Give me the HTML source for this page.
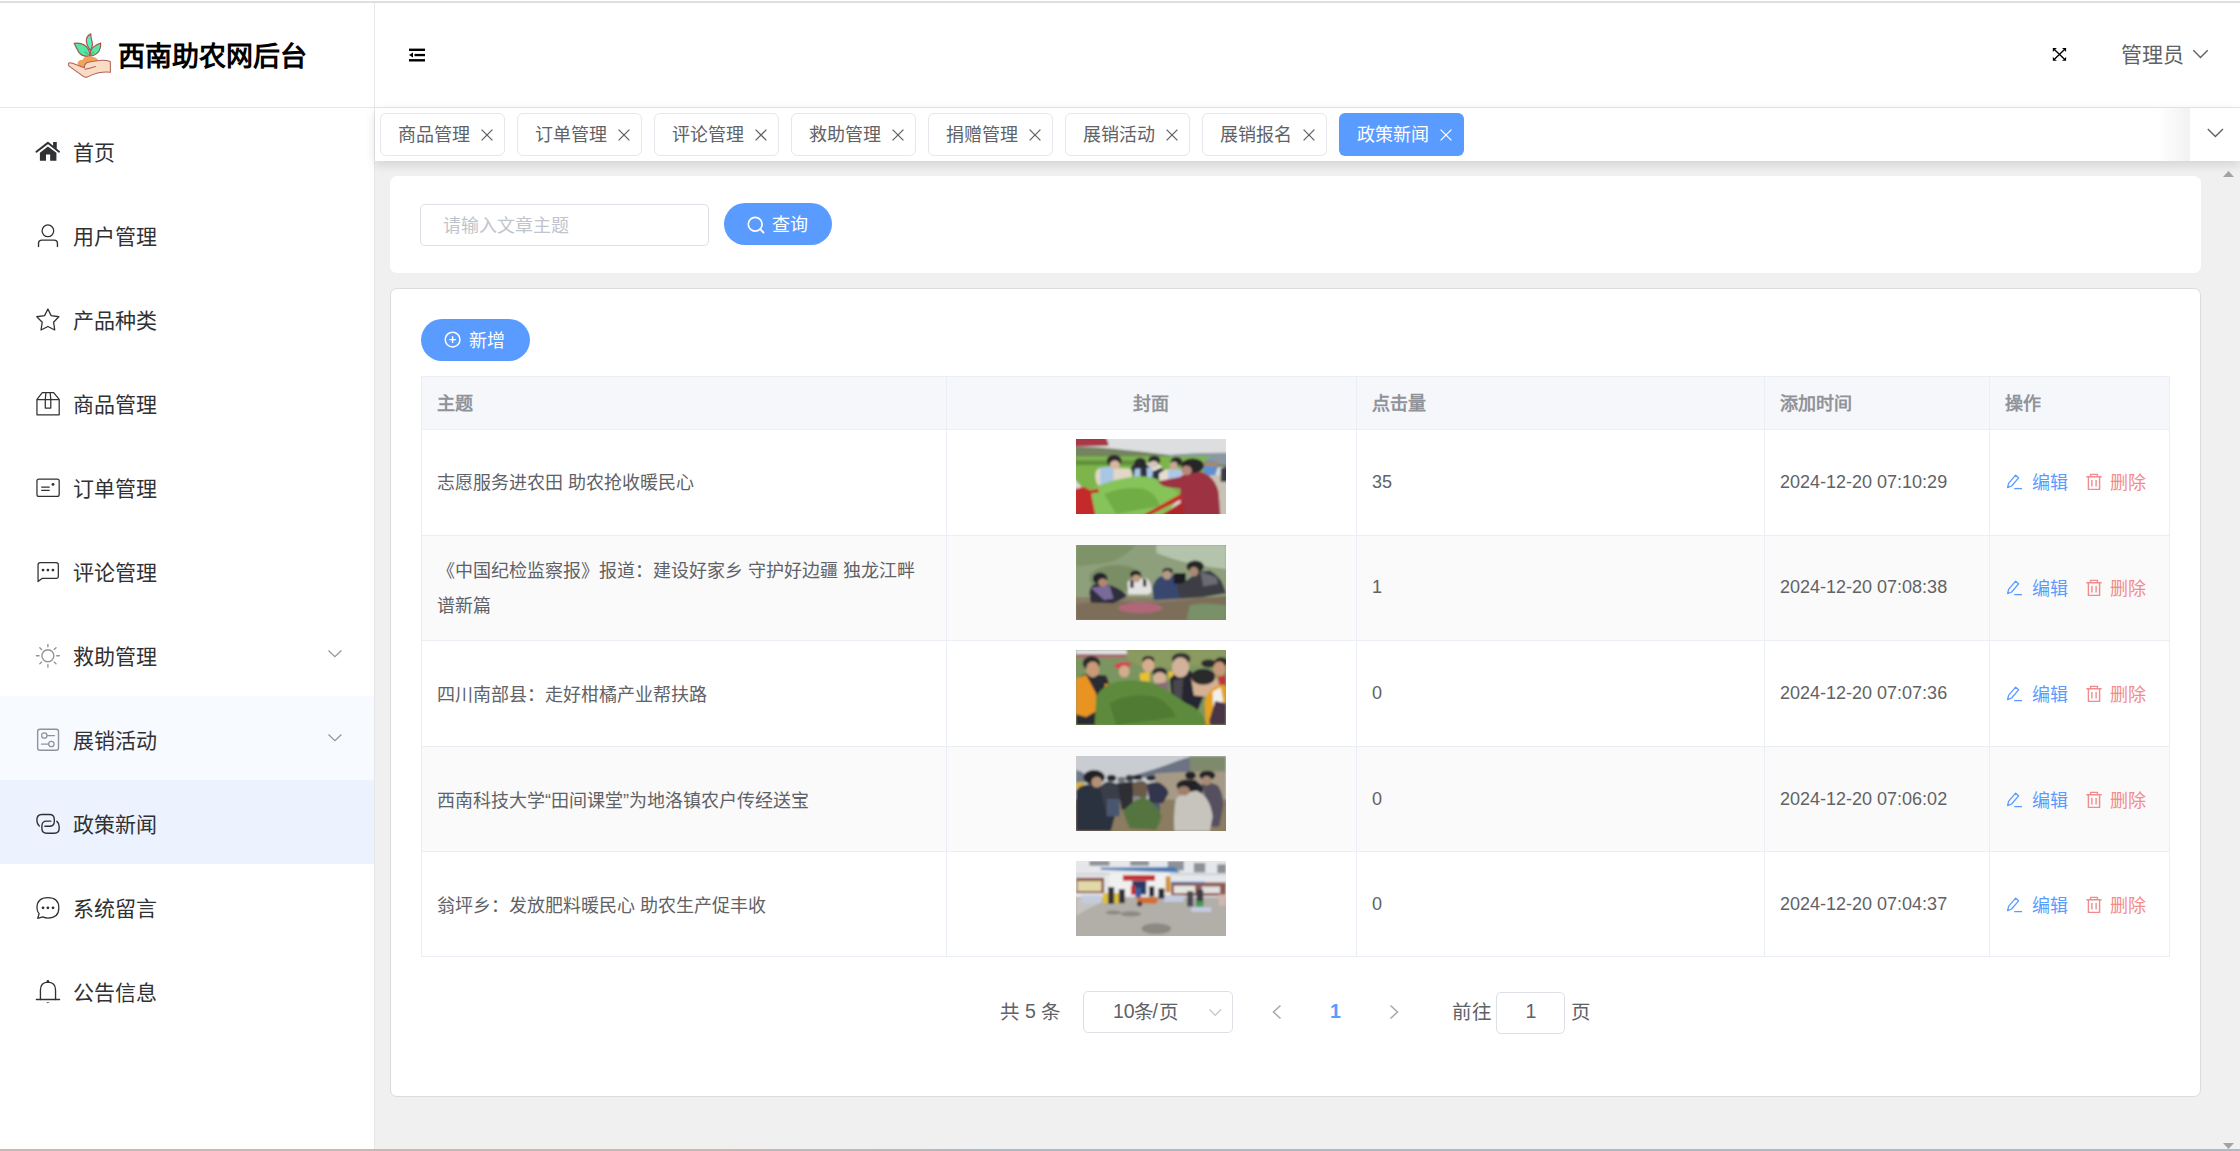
<!DOCTYPE html>
<html lang="zh-CN"><head><meta charset="utf-8"><style>
*{box-sizing:border-box;margin:0;padding:0}
html,body{width:2240px;height:1151px;overflow:hidden;background:#fff;font-family:"Liberation Sans",sans-serif;color:#303133}
.a{position:absolute}
.t{position:absolute;white-space:nowrap;line-height:1}
svg{position:absolute;overflow:visible}
</style></head><body>
<svg width="0" height="0" style="position:absolute"><defs><filter id="bl" x="-10%" y="-10%" width="120%" height="120%"><feGaussianBlur stdDeviation="14"/></filter></defs></svg>
<div class="a" style="left:0px;top:3px;width:374px;height:1146px;background:#fff;"></div>
<div class="a" style="left:375px;top:108px;width:1865px;height:1041px;background:#f0f0f0;"></div>
<div class="a" style="left:0px;top:1px;width:2240px;height:2px;background:#dfe0de;"></div>
<div class="a" style="left:0px;top:1149px;width:2240px;height:2px;background:linear-gradient(to right, #c3b9b5 0px, #c3b9b5 720px, #b1b9c0 1000px, #b1b9c0 2240px);"></div>
<div class="a" style="left:0px;top:107px;width:2240px;height:1px;background:#e6e6e6;"></div>
<div class="a" style="left:374px;top:3px;width:1px;height:1146px;background:#e6e6e6;"></div>
<div class="a" style="left:0px;top:696px;width:374px;height:84px;background:#f7faff;"></div>
<div class="a" style="left:0px;top:780px;width:374px;height:84px;background:#ecf3fe;"></div>
<svg style="left:30px;top:130px" width="40" height="40" viewBox="0 0 1151 1151"><path d="M185 625 L515 370 L835 625" fill="none" stroke="#303133" stroke-width="56" stroke-linecap="round" stroke-linejoin="round" stroke-linecap="butt"/><path fill="#303133" d="M665 345 H770 V545 L665 465 Z"/><path fill="#303133" fill-rule="evenodd" d="M285 655 L515 478 L760 655 V885 H285 Z M460 705 V885 H580 V705 Z"/></svg>
<div class="t" style="left:73px;top:142px;font-size:21px;color:#303133;">首页</div>
<svg style="left:30px;top:215px" width="40" height="40" viewBox="0 0 1151 1151"><circle cx="515" cy="455" r="168" fill="none" stroke="#303133" stroke-width="37" stroke-linecap="round" stroke-linejoin="round"/><path d="M245 905 V820 Q245 722 345 722 H690 Q790 722 790 820 V905" fill="none" stroke="#303133" stroke-width="40" stroke-linecap="round" stroke-linejoin="round" stroke-linecap="butt"/></svg>
<div class="t" style="left:73px;top:226px;font-size:21px;color:#303133;">用户管理</div>
<svg style="left:30px;top:300px" width="40" height="40" viewBox="0 0 1151 1151"><path d="M515 258 L608 450 L830 482 L678 640 L712 862 L515 762 L318 862 L352 640 L195 482 L420 450 Z" fill="none" stroke="#303133" stroke-width="37" stroke-linecap="round" stroke-linejoin="round"/></svg>
<div class="t" style="left:73px;top:310px;font-size:21px;color:#303133;">产品种类</div>
<svg style="left:30px;top:383px" width="40" height="40" viewBox="0 0 1151 1151"><path d="M200 470 L355 275 H680 L840 470 V915 H200 Z M200 478 H840 M458 280 L440 478 V720 H598 V478 L580 280" fill="none" stroke="#303133" stroke-width="36" stroke-linecap="round" stroke-linejoin="round" stroke-linejoin="miter" stroke-linecap="butt"/></svg>
<div class="t" style="left:73px;top:394px;font-size:21px;color:#303133;">商品管理</div>
<svg style="left:30px;top:467px" width="40" height="40" viewBox="0 0 1151 1151"><rect x="200" y="350" width="640" height="495" rx="55" fill="none" stroke="#303133" stroke-width="36" stroke-linecap="round" stroke-linejoin="round"/><path d="M335 577 H555 M335 672 H555" fill="none" stroke="#303133" stroke-width="36" stroke-linecap="round" stroke-linejoin="round"/><circle cx="662" cy="500" r="42" fill="#303133"/></svg>
<div class="t" style="left:73px;top:478px;font-size:21px;color:#303133;">订单管理</div>
<svg style="left:30px;top:551px" width="40" height="40" viewBox="0 0 1151 1151"><path d="M232 880 V395 Q232 332 295 332 H752 Q815 332 815 395 V728 Q815 790 752 790 H345 Z" fill="none" stroke="#303133" stroke-width="36" stroke-linecap="round" stroke-linejoin="round"/><circle cx="375" cy="550" r="40" fill="#303133"/><circle cx="515" cy="550" r="40" fill="#303133"/><circle cx="660" cy="550" r="40" fill="#303133"/></svg>
<div class="t" style="left:73px;top:562px;font-size:21px;color:#303133;">评论管理</div>
<svg style="left:30px;top:635px" width="40" height="40" viewBox="0 0 1151 1151"><circle cx="515" cy="598" r="172" fill="none" stroke="#909399" stroke-width="40" stroke-linecap="round" stroke-linejoin="round"/><path d="M515 268 V340 M515 855 V925 M185 598 H262 M768 598 H845 M282 368 L335 415 M748 368 L695 415 M282 828 L335 780 M748 828 L695 780" fill="none" stroke="#909399" stroke-width="38" stroke-linecap="round" stroke-linejoin="round"/></svg>
<div class="t" style="left:73px;top:646px;font-size:21px;color:#303133;">救助管理</div>
<svg style="left:320px;top:640px" width="30" height="30" viewBox="0 0 30 30"><path d="M8.5 10.5 L14.9 16.6 L21.4 10.5" fill="none" stroke="#909399" stroke-width="1.2"/></svg>
<svg style="left:30px;top:719px" width="40" height="40" viewBox="0 0 1151 1151"><rect x="220" y="295" width="600" height="605" rx="65" fill="none" stroke="#909399" stroke-width="40" stroke-linecap="round" stroke-linejoin="round"/><circle cx="412" cy="475" r="78" fill="none" stroke="#909399" stroke-width="36" stroke-linecap="round" stroke-linejoin="round"/><path d="M492 478 H705" fill="none" stroke="#909399" stroke-width="36" stroke-linecap="round" stroke-linejoin="round"/><circle cx="615" cy="720" r="78" fill="none" stroke="#909399" stroke-width="36" stroke-linecap="round" stroke-linejoin="round"/><path d="M330 720 H535" fill="none" stroke="#909399" stroke-width="36" stroke-linecap="round" stroke-linejoin="round"/></svg>
<div class="t" style="left:73px;top:730px;font-size:21px;color:#303133;">展销活动</div>
<svg style="left:320px;top:724px" width="30" height="30" viewBox="0 0 30 30"><path d="M8.5 10.5 L14.9 16.6 L21.4 10.5" fill="none" stroke="#909399" stroke-width="1.2"/></svg>
<svg style="left:30px;top:803px" width="40" height="40" viewBox="0 0 1151 1151"><path d="M268 665 Q198 600 198 505 V495 Q198 332 340 332 H560 Q700 332 700 475 V525 Q700 670 560 670 H428" fill="none" stroke="#303133" stroke-width="40" stroke-linecap="round" stroke-linejoin="round" stroke-linecap="butt"/><path d="M600 520 H480 Q342 520 342 660 V730 Q342 872 480 872 H700 Q840 872 840 730 V680 Q840 580 772 528" fill="none" stroke="#303133" stroke-width="40" stroke-linecap="round" stroke-linejoin="round" stroke-linecap="butt"/></svg>
<div class="t" style="left:73px;top:814px;font-size:21px;color:#303133;">政策新闻</div>
<svg style="left:30px;top:887px" width="40" height="40" viewBox="0 0 1151 1151"><path d="M222 900 L262 770 Q200 700 200 600 Q200 305 515 305 Q830 305 830 600 Q830 895 515 895 Q440 895 365 860 Z" fill="none" stroke="#303133" stroke-width="36" stroke-linecap="round" stroke-linejoin="round"/><circle cx="375" cy="600" r="40" fill="#303133"/><circle cx="515" cy="600" r="40" fill="#303133"/><circle cx="662" cy="600" r="40" fill="#303133"/></svg>
<div class="t" style="left:73px;top:898px;font-size:21px;color:#303133;">系统留言</div>
<svg style="left:30px;top:971px" width="40" height="40" viewBox="0 0 1151 1151"><path d="M300 820 V545 Q300 335 515 322 Q735 335 735 545 V820" fill="none" stroke="#303133" stroke-width="38" stroke-linecap="round" stroke-linejoin="round"/><path d="M185 820 H850" fill="none" stroke="#303133" stroke-width="40" stroke-linecap="round" stroke-linejoin="round"/><circle cx="515" cy="300" r="38" fill="#303133"/><path d="M465 900 H565 L515 930 Z" fill="#303133"/></svg>
<div class="t" style="left:73px;top:982px;font-size:21px;color:#303133;">公告信息</div>
<svg style="left:60px;top:25px" width="70" height="60" viewBox="0 0 1343 1151">
<g stroke="#a9504a" stroke-width="22" stroke-linejoin="round">
<path fill="#4fe9a3" d="M272 352 Q470 325 545 470 Q585 545 570 600 Q430 615 360 520 Q318 455 272 352 Z"/>
<path fill="#58efbf" d="M590 170 Q470 230 520 380 Q545 440 580 490 Q640 400 615 320 Q590 250 590 170 Z"/>
<path fill="#4fe9a3" d="M780 345 Q640 400 600 470 Q575 530 580 600 Q700 580 750 500 Q790 430 780 345 Z"/>
</g>
<path d="M470 510 L570 585 M570 585 L650 520" stroke="#b4574f" stroke-width="14" fill="none"/>
<path fill="#eea55a" d="M335 740 Q340 665 440 665 Q450 610 560 600 Q700 605 745 690 Q600 760 460 820 Q360 800 335 740 Z"/>
<path fill="#f8dcc4" stroke="#b0605a" stroke-width="20" stroke-linejoin="round" d="M165 735 Q180 715 240 735 L470 820 Q460 760 520 720 Q640 690 760 680 Q880 672 965 700 L968 905 Q850 895 740 915 Q620 945 520 1000 Q480 1010 440 980 L175 790 Q150 760 165 735 Z"/>
<path d="M480 850 Q560 830 680 795" stroke="#b0605a" stroke-width="20" fill="none" stroke-linecap="round"/>
</svg>
<div class="t" style="left:118.2px;top:43.8px;font-size:27px;color:#000;font-weight:bold;">西南助农网后台</div>
<svg style="left:400px;top:40px" width="35" height="30" viewBox="0 0 35 30"><rect x="9" y="8.6" width="16" height="2.4" fill="#000"/><rect x="14.5" y="13.9" width="10.5" height="2.3" fill="#000"/><rect x="9" y="19.1" width="16" height="2.4" fill="#000"/><path d="M9 15.05 L13 12.6 V17.5 Z" fill="#000"/></svg>
<svg style="left:2045px;top:40px" width="30" height="30" viewBox="0 0 1151 1151"><path d="M350 355 L760 745 M760 355 L350 745" stroke="#000" stroke-width="52" fill="none"/><path d="M300 305 H460 L395 355 L350 400 L300 460 Z M810 305 H650 L715 355 L760 400 L810 460 Z M300 800 H460 L395 750 L350 705 L300 645 Z M810 800 H650 L715 750 L760 705 L810 645 Z" fill="#000"/></svg>
<div class="t" style="left:2120.5px;top:44px;font-size:21px;color:#606266;">管理员</div>
<svg style="left:2190px;top:45px" width="20" height="20" viewBox="0 0 20 20"><path d="M3.3 5.3 L10.5 12.6 L17.7 5.3" fill="none" stroke="#606266" stroke-width="1.4"/></svg>
<div class="a" style="left:375px;top:108px;width:1865px;height:53px;background:#fff;box-shadow:0 4px 10px rgba(0,0,0,0.12);z-index:1"></div>
<div class="a" style="left:380px;top:113px;width:125px;height:43px;background:#fff;border:1px solid #e4e7ed;border-radius:6px;z-index:2;"></div>
<div class="t" style="left:398px;top:126.3px;font-size:18px;color:#606266;z-index:2;">商品管理</div>
<svg style="z-index:2;left:481px;top:129px" width="12" height="12" viewBox="0 0 12 12"><path d="M0.6 0.6 L11.4 11.4 M11.4 0.6 L0.6 11.4" stroke="#606266" stroke-width="1.3" fill="none"/></svg>
<div class="a" style="left:517px;top:113px;width:125px;height:43px;background:#fff;border:1px solid #e4e7ed;border-radius:6px;z-index:2;"></div>
<div class="t" style="left:535px;top:126.3px;font-size:18px;color:#606266;z-index:2;">订单管理</div>
<svg style="z-index:2;left:618px;top:129px" width="12" height="12" viewBox="0 0 12 12"><path d="M0.6 0.6 L11.4 11.4 M11.4 0.6 L0.6 11.4" stroke="#606266" stroke-width="1.3" fill="none"/></svg>
<div class="a" style="left:654px;top:113px;width:125px;height:43px;background:#fff;border:1px solid #e4e7ed;border-radius:6px;z-index:2;"></div>
<div class="t" style="left:672px;top:126.3px;font-size:18px;color:#606266;z-index:2;">评论管理</div>
<svg style="z-index:2;left:755px;top:129px" width="12" height="12" viewBox="0 0 12 12"><path d="M0.6 0.6 L11.4 11.4 M11.4 0.6 L0.6 11.4" stroke="#606266" stroke-width="1.3" fill="none"/></svg>
<div class="a" style="left:791px;top:113px;width:125px;height:43px;background:#fff;border:1px solid #e4e7ed;border-radius:6px;z-index:2;"></div>
<div class="t" style="left:809px;top:126.3px;font-size:18px;color:#606266;z-index:2;">救助管理</div>
<svg style="z-index:2;left:892px;top:129px" width="12" height="12" viewBox="0 0 12 12"><path d="M0.6 0.6 L11.4 11.4 M11.4 0.6 L0.6 11.4" stroke="#606266" stroke-width="1.3" fill="none"/></svg>
<div class="a" style="left:928px;top:113px;width:125px;height:43px;background:#fff;border:1px solid #e4e7ed;border-radius:6px;z-index:2;"></div>
<div class="t" style="left:946px;top:126.3px;font-size:18px;color:#606266;z-index:2;">捐赠管理</div>
<svg style="z-index:2;left:1029px;top:129px" width="12" height="12" viewBox="0 0 12 12"><path d="M0.6 0.6 L11.4 11.4 M11.4 0.6 L0.6 11.4" stroke="#606266" stroke-width="1.3" fill="none"/></svg>
<div class="a" style="left:1065px;top:113px;width:125px;height:43px;background:#fff;border:1px solid #e4e7ed;border-radius:6px;z-index:2;"></div>
<div class="t" style="left:1083px;top:126.3px;font-size:18px;color:#606266;z-index:2;">展销活动</div>
<svg style="z-index:2;left:1166px;top:129px" width="12" height="12" viewBox="0 0 12 12"><path d="M0.6 0.6 L11.4 11.4 M11.4 0.6 L0.6 11.4" stroke="#606266" stroke-width="1.3" fill="none"/></svg>
<div class="a" style="left:1202px;top:113px;width:125px;height:43px;background:#fff;border:1px solid #e4e7ed;border-radius:6px;z-index:2;"></div>
<div class="t" style="left:1220px;top:126.3px;font-size:18px;color:#606266;z-index:2;">展销报名</div>
<svg style="z-index:2;left:1303px;top:129px" width="12" height="12" viewBox="0 0 12 12"><path d="M0.6 0.6 L11.4 11.4 M11.4 0.6 L0.6 11.4" stroke="#606266" stroke-width="1.3" fill="none"/></svg>
<div class="a" style="left:1339px;top:113px;width:125px;height:43px;background:#5a9bff;border-radius:6px;z-index:2;"></div>
<div class="t" style="left:1357px;top:126.3px;font-size:18px;color:#fff;z-index:2;">政策新闻</div>
<svg style="z-index:2;left:1440px;top:129px" width="12" height="12" viewBox="0 0 12 12"><path d="M0.6 0.6 L11.4 11.4 M11.4 0.6 L0.6 11.4" stroke="#fff" stroke-width="1.3" fill="none"/></svg>
<div class="a" style="left:2157px;top:108px;width:33px;height:53px;background:linear-gradient(to right, rgba(0,0,0,0), rgba(0,0,0,0.05));z-index:2"></div>
<div class="a" style="left:2190px;top:108px;width:50px;height:53px;background:#fff;z-index:2"></div>
<svg style="left:2200px;top:120px;z-index:3" width="30" height="30" viewBox="0 0 30 30"><path d="M7.8 9 L15.4 16.6 L23 9" fill="none" stroke="#606266" stroke-width="1.4"/></svg>
<svg style="left:2220px;top:168px" width="20" height="12" viewBox="0 0 20 12"><path d="M3 9 L8.5 3 L14 9 Z" fill="#a3a3a3"/></svg>
<svg style="left:2220px;top:1140px" width="20" height="12" viewBox="0 0 20 12"><path d="M3 3 L14 3 L8.5 9 Z" fill="#a3a3a3"/></svg>
<div class="a" style="left:390px;top:176px;width:1811px;height:97px;background:#fff;border-radius:7px"></div>
<div class="a" style="left:420px;top:204px;width:289px;height:42px;background:#fff;border:1px solid #dcdfe6;border-radius:5px"></div>
<div class="t" style="left:443px;top:216.8px;font-size:18px;color:#c0c4cc;">请输入文章主题</div>
<div class="a" style="left:724px;top:203px;width:108px;height:42px;background:#5a9bff;border-radius:21px"></div>
<svg style="left:746px;top:215px" width="20" height="20" viewBox="0 0 20 20"><circle cx="9.2" cy="9.2" r="6.9" fill="none" stroke="#fff" stroke-width="1.7"/><path d="M14.2 14.2 L17.5 17.5" stroke="#fff" stroke-width="1.8" stroke-linecap="round"/></svg>
<div class="t" style="left:772px;top:216.3px;font-size:18px;color:#fff;">查询</div>
<div class="a" style="left:390px;top:288px;width:1811px;height:809px;background:#fff;border:1px solid #dcdcdc;border-radius:7px"></div>
<div class="a" style="left:421px;top:319px;width:109px;height:42px;background:#5a9bff;border-radius:21px"></div>
<svg style="left:444px;top:331px" width="18" height="18" viewBox="0 0 18 18"><circle cx="8.6" cy="8.6" r="7.4" fill="none" stroke="#fff" stroke-width="1.5"/><path d="M8.6 5.2 V12 M5.2 8.6 H12" stroke="#fff" stroke-width="1.4"/></svg>
<div class="t" style="left:469px;top:332.3px;font-size:18px;color:#fff;">新增</div>
<div class="a" style="left:421px;top:376px;width:1748px;height:53px;background:#f5f7fa;"></div>
<div class="a" style="left:421px;top:535px;width:1748px;height:105px;background:#fafafa;"></div>
<div class="a" style="left:421px;top:746px;width:1748px;height:105px;background:#fafafa;"></div>
<div class="a" style="left:421px;top:376px;width:1749px;height:1px;background:#ebeef5;"></div>
<div class="a" style="left:421px;top:429px;width:1749px;height:1px;background:#ebeef5;"></div>
<div class="a" style="left:421px;top:535px;width:1749px;height:1px;background:#ebeef5;"></div>
<div class="a" style="left:421px;top:640px;width:1749px;height:1px;background:#ebeef5;"></div>
<div class="a" style="left:421px;top:746px;width:1749px;height:1px;background:#ebeef5;"></div>
<div class="a" style="left:421px;top:851px;width:1749px;height:1px;background:#ebeef5;"></div>
<div class="a" style="left:421px;top:956px;width:1749px;height:1px;background:#ebeef5;"></div>
<div class="a" style="left:421px;top:376px;width:1px;height:581px;background:#ebeef5;"></div>
<div class="a" style="left:946px;top:376px;width:1px;height:581px;background:#ebeef5;"></div>
<div class="a" style="left:1356px;top:376px;width:1px;height:581px;background:#ebeef5;"></div>
<div class="a" style="left:1764px;top:376px;width:1px;height:581px;background:#ebeef5;"></div>
<div class="a" style="left:1989px;top:376px;width:1px;height:581px;background:#ebeef5;"></div>
<div class="a" style="left:2169px;top:376px;width:1px;height:581px;background:#ebeef5;"></div>
<div class="t" style="left:437px;top:394.8px;font-size:18px;color:#909399;font-weight:bold;">主题</div>
<div class="t" style="left:1133px;top:394.8px;font-size:18px;color:#909399;font-weight:bold;">封面</div>
<div class="t" style="left:1372px;top:394.8px;font-size:18px;color:#909399;font-weight:bold;">点击量</div>
<div class="t" style="left:1780px;top:394.8px;font-size:18px;color:#909399;font-weight:bold;">添加时间</div>
<div class="t" style="left:2005px;top:394.8px;font-size:18px;color:#909399;font-weight:bold;">操作</div>
<div class="t" style="left:437px;top:474.0px;font-size:18px;color:#606266;">志愿服务进农田 助农抢收暖民心</div>
<svg style="left:1076px;top:439px;overflow:hidden" width="150" height="75" viewBox="0 0 150 75" preserveAspectRatio="none"><g transform="scale(0.0669643,0.0669643)"><g filter="url(#bl)">
<rect x="-60" y="-60" width="2360" height="1240" fill="#dcdedf"/>
<path d="M-60 120 Q300 110 600 150 Q1000 190 1400 240 Q1800 220 2300 210 V420 H-60 Z" fill="#73845f"/>
<path d="M1400 240 Q1800 200 2300 205 V380 H1400 Z" fill="#8c98a0"/>
<rect x="-60" y="260" width="2060" height="620" fill="#7db54c"/>
<rect x="-60" y="320" width="960" height="70" fill="#62903e"/>
<rect x="2000" y="540" width="300" height="640" fill="#c9c2b4"/>
<path d="M-60 -60 H420 Q500 60 480 100 Q200 110 -60 115 Z" fill="#a83845"/>
<path d="M290 520 Q300 420 420 430 L800 440 Q860 520 820 690 L330 690 Q280 620 290 520 Z" fill="#e1d8c6"/>
<path d="M360 430 L560 410 L560 720 L360 720 Z" fill="#a9c6e6"/>
<ellipse cx="570" cy="330" rx="110" ry="95" fill="#2b2a2c"/>
<ellipse cx="580" cy="385" rx="75" ry="65" fill="#d8b8a0"/>
<path d="M820 420 Q860 360 930 370 L1100 380 Q1350 420 1360 560 L1250 620 L880 620 Z" fill="#2f3040"/>
<path d="M1050 360 L1200 360 L1290 420 L1150 480 Z" fill="#ece6dc"/>
<path d="M880 450 L960 430 L960 610 L860 610 Z" fill="#a9c6e6"/>
<path d="M1060 420 L1150 440 L1140 580 L1060 580 Z" fill="#a9c6e6"/>
<ellipse cx="960" cy="360" rx="90" ry="80" fill="#2a2a2d"/>
<ellipse cx="1170" cy="320" rx="90" ry="70" fill="#2a2a2d"/>
<ellipse cx="1160" cy="380" rx="65" ry="50" fill="#d7c6b8"/>
<path d="M1240 520 Q1300 450 1400 450 L1600 460 L1620 620 L1240 620 Z" fill="#e6ddd0"/>
<path d="M1370 460 L1560 450 L1600 600 L1380 620 Z" fill="#acc8e8"/>
<ellipse cx="1500" cy="340" rx="90" ry="70" fill="#2a2a2d"/>
<ellipse cx="1460" cy="400" rx="60" ry="60" fill="#c8a890"/>
<path d="M1920 330 Q2000 280 2080 330 L2120 420 L2080 540 L1900 540 Z" fill="#5e8fd0"/>
<path d="M1900 340 L2120 340 L2120 410 L1900 400 Z" fill="#a88860"/>
<path d="M2160 440 L2300 400 L2300 640 L2160 640 Z" fill="#3a3a44"/>
<path d="M200 760 Q500 600 900 560 Q1150 540 1320 660 Q1480 760 1560 860 L1300 1180 L220 1180 Z" fill="#86c45a"/>
<path d="M420 820 Q700 700 1000 740 Q1200 800 1250 1000 L600 1120 Z" fill="#6fae44"/>
<path d="M1560 560 Q1700 470 1860 490 Q2080 560 2130 800 L2160 1180 L1580 1180 L1560 900 Z" fill="#9c3242"/>
<path d="M1220 640 Q1400 590 1600 560 L1640 740 Q1450 740 1300 700 Z" fill="#9c3242"/>
<ellipse cx="1740" cy="400" rx="170" ry="110" fill="#262628"/>
<ellipse cx="1650" cy="470" rx="80" ry="70" fill="#b8887a"/>
<path d="M-60 690 Q150 700 220 780 L300 1180 L-60 1180 Z" fill="#c42a2a"/>
<path d="M-60 560 L90 720 L-60 760 Z" fill="#d8d8d8"/>
<path d="M140 780 L330 740 L340 800 L160 820 Z" fill="#c42a2a"/>
<path d="M920 1180 L1560 820 L1600 890 L1020 1180 Z" fill="#c42a2a"/>
<path d="M1200 1180 L1600 930 L1600 1180 Z" fill="#b02528"/>
</g></g></svg>
<div class="t" style="left:1372px;top:472.5px;font-size:18px;color:#606266;">35</div>
<div class="t" style="left:1780px;top:472.5px;font-size:18px;color:#606266;">2024-12-20 07:10:29</div>
<svg style="left:2006px;top:473.4px" width="18" height="18" viewBox="0 0 18 18"><path d="M1.6 14.6 L2.6 10.4 L9.6 2.2 L12.6 4.8 L5.6 13 Z" fill="none" stroke="#5a9bff" stroke-width="1.3" stroke-linejoin="round"/><path d="M8.2 15.6 H16" stroke="#5a9bff" stroke-width="1.3"/></svg>
<div class="t" style="left:2031.5px;top:474.0px;font-size:18px;color:#5a9bff;">编辑</div>
<svg style="left:2084.5px;top:473.4px" width="18" height="18" viewBox="0 0 18 18"><path d="M1.4 3.8 H16.6 M5.6 3.8 V1.4 H12.4 V3.8 M3.4 3.8 V16.4 H14.6 V3.8 M6.9 7 V13.4 M11.1 7 V13.4" fill="none" stroke="#f28b8b" stroke-width="1.4"/></svg>
<div class="t" style="left:2109.5px;top:474.0px;font-size:18px;color:#f28b8b;">删除</div>
<div class="t" style="left:437px;top:562.0px;font-size:18px;color:#606266;">《中国纪检监察报》报道：建设好家乡 守护好边疆 独龙江畔</div>
<div class="t" style="left:437px;top:597.0px;font-size:18px;color:#606266;">谱新篇</div>
<svg style="left:1076px;top:545px;overflow:hidden" width="150" height="75" viewBox="0 0 150 75" preserveAspectRatio="none"><g transform="scale(0.0669643,0.0669643)"><g filter="url(#bl)">
<rect x="-60" y="-60" width="2360" height="1240" fill="#8e9f7c"/>
<path d="M1200 0 H2240 V360 Q1800 300 1600 250 Q1400 200 1200 120 Z" fill="#b4c4ac"/>
<path d="M0 0 H900 Q700 200 500 260 Q200 300 0 320 Z" fill="#7e9468"/>
<ellipse cx="600" cy="500" rx="400" ry="200" fill="#7a8e66"/>
<rect x="-60" y="780" width="2360" height="400" fill="#8a7d68"/>
<path d="M0 880 Q400 820 800 850 Q1300 880 1800 800 L2240 760 V1120 H0 Z" fill="#7b6e58"/>
<ellipse cx="960" cy="940" rx="330" ry="80" fill="#b06878"/>
<path d="M1700 900 Q1900 850 2240 900 V1120 H1650 Z" fill="#7a9068"/>
<path d="M200 700 Q220 580 320 580 L520 600 Q720 680 760 760 L700 800 L560 870 L220 860 Z" fill="#2e2e3c"/>
<path d="M220 640 L500 600 L560 800 L420 820 Z" fill="#7a6a9a"/>
<ellipse cx="360" cy="500" rx="110" ry="90" fill="#24242a"/>
<ellipse cx="400" cy="560" rx="70" ry="60" fill="#b08870"/>
<path d="M770 560 Q800 500 880 500 L1060 500 Q1130 560 1130 700 L1080 740 L780 740 Z" fill="#e4e2e0"/>
<path d="M810 520 L860 520 L860 640 L810 640 Z M1000 500 L1050 520 L1050 620 L1000 620 Z" fill="#2c2c32"/>
<ellipse cx="890" cy="440" rx="80" ry="60" fill="#202024"/>
<ellipse cx="900" cy="500" rx="60" ry="55" fill="#c09a80"/>
<path d="M1140 640 Q1180 480 1300 460 L1500 440 Q1600 540 1650 640 L1560 800 L1160 820 Z" fill="#38466e"/>
<rect x="1460" y="420" width="180" height="160" fill="#1e1e22"/>
<ellipse cx="1370" cy="390" rx="80" ry="50" fill="#3a3a40"/>
<ellipse cx="1360" cy="450" rx="65" ry="65" fill="#b99a84"/>
<path d="M1500 620 Q1700 520 1800 400 L2000 380 Q2160 480 2200 600 L2240 720 L1880 780 L1560 800 Z" fill="#3c3c44"/>
<path d="M1860 400 L2100 480 L2120 580 L1900 620 Z" fill="#6a6c72"/>
<ellipse cx="1780" cy="320" rx="130" ry="90" fill="#262628"/>
<ellipse cx="1760" cy="400" rx="70" ry="70" fill="#a88a74"/>
</g></g></svg>
<div class="t" style="left:1372px;top:578.0px;font-size:18px;color:#606266;">1</div>
<div class="t" style="left:1780px;top:578.0px;font-size:18px;color:#606266;">2024-12-20 07:08:38</div>
<svg style="left:2006px;top:578.9px" width="18" height="18" viewBox="0 0 18 18"><path d="M1.6 14.6 L2.6 10.4 L9.6 2.2 L12.6 4.8 L5.6 13 Z" fill="none" stroke="#5a9bff" stroke-width="1.3" stroke-linejoin="round"/><path d="M8.2 15.6 H16" stroke="#5a9bff" stroke-width="1.3"/></svg>
<div class="t" style="left:2031.5px;top:579.5px;font-size:18px;color:#5a9bff;">编辑</div>
<svg style="left:2084.5px;top:578.9px" width="18" height="18" viewBox="0 0 18 18"><path d="M1.4 3.8 H16.6 M5.6 3.8 V1.4 H12.4 V3.8 M3.4 3.8 V16.4 H14.6 V3.8 M6.9 7 V13.4 M11.1 7 V13.4" fill="none" stroke="#f28b8b" stroke-width="1.4"/></svg>
<div class="t" style="left:2109.5px;top:579.5px;font-size:18px;color:#f28b8b;">删除</div>
<div class="t" style="left:437px;top:685.5px;font-size:18px;color:#606266;">四川南部县：走好柑橘产业帮扶路</div>
<svg style="left:1076px;top:650px;overflow:hidden" width="150" height="75" viewBox="0 0 150 75" preserveAspectRatio="none"><g transform="scale(0.0669643,0.0669643)"><g filter="url(#bl)">
<rect x="-60" y="-60" width="2360" height="1240" fill="#7a9560"/>
<rect x="0" y="0" width="760" height="110" fill="#e2e4e6"/>
<rect x="0" y="60" width="760" height="60" fill="#a87070"/>
<path d="M760 0 H2240 V250 Q1800 200 1200 300 Q900 260 760 120 Z" fill="#8a9a60"/>
<path d="M0 450 Q80 380 140 360 L450 380 Q520 500 500 800 L420 1120 L0 1120 Z" fill="#2c2a32"/>
<path d="M0 430 L150 370 L300 650 L330 900 L150 1000 L0 960 Z" fill="#e99422"/>
<path d="M430 500 L500 520 L480 800 L420 780 Z" fill="#e99422"/>
<ellipse cx="230" cy="200" rx="130" ry="110" fill="#2a2a2e"/>
<ellipse cx="250" cy="290" rx="100" ry="120" fill="#c89a78"/>
<path d="M560 240 Q620 170 760 180 Q850 200 830 230 L620 280 Z" fill="#d24656"/>
<ellipse cx="720" cy="320" rx="80" ry="90" fill="#d4ac8c"/>
<path d="M560 520 L720 520 L720 700 L560 680 Z" fill="#9a7aa6"/>
<ellipse cx="1080" cy="150" rx="90" ry="60" fill="#222226"/>
<ellipse cx="1080" cy="230" rx="90" ry="100" fill="#d6ae8e"/>
<path d="M950 350 L1100 320 L1100 470 L960 460 Z" fill="#e8c030"/>
<ellipse cx="1250" cy="330" rx="110" ry="70" fill="#302c30"/>
<ellipse cx="1250" cy="420" rx="100" ry="90" fill="#d4b098"/>
<path d="M1200 500 L1380 480 L1380 620 L1200 620 Z" fill="#8a6a7a"/>
<path d="M1380 320 L1450 320 L1450 440 L1380 440 Z" fill="#e8c030"/>
<path d="M1400 420 Q1500 330 1700 300 Q1820 420 1900 700 L1820 900 L1440 860 Z" fill="#262630"/>
<path d="M1450 450 L1600 420 L1580 760 L1460 800 Z" fill="#4a4650"/>
<ellipse cx="1570" cy="130" rx="140" ry="90" fill="#3a3636"/>
<ellipse cx="1560" cy="260" rx="130" ry="150" fill="#d2b29a"/>
<ellipse cx="1980" cy="200" rx="110" ry="60" fill="#2a2a2c"/>
<ellipse cx="2170" cy="180" rx="100" ry="70" fill="#2a2a2c"/>
<ellipse cx="2140" cy="280" rx="90" ry="110" fill="#c89878"/>
<path d="M2120 400 L2240 380 L2240 520 L2140 520 Z" fill="#c43040"/>
<path d="M1720 420 Q1900 280 2040 320 Q2120 420 2140 540 L2000 700 L1760 680 Z" fill="#d4b094"/>
<ellipse cx="1900" cy="400" rx="180" ry="120" fill="#2a2a2c"/>
<path d="M1920 800 Q1960 560 2160 520 L2240 540 V1120 H1940 Z" fill="#e8a21e"/>
<path d="M2040 620 L2160 560 L2200 760 L2050 900 Z" fill="#f0f0ee"/>
<path d="M1990 1050 L2080 760 L2240 800 V1120 H2000 Z" fill="#4a3646"/>
<path d="M300 700 Q400 500 700 460 Q1000 420 1300 560 Q1500 700 1650 800 Q1900 900 1950 1120 L280 1120 Z" fill="#5d8a3c"/>
<path d="M500 800 Q800 620 1200 700 Q1400 800 1500 1000 L600 1120 Z" fill="#4f7c32"/>
</g></g></svg>
<div class="t" style="left:1372px;top:684.0px;font-size:18px;color:#606266;">0</div>
<div class="t" style="left:1780px;top:684.0px;font-size:18px;color:#606266;">2024-12-20 07:07:36</div>
<svg style="left:2006px;top:684.9px" width="18" height="18" viewBox="0 0 18 18"><path d="M1.6 14.6 L2.6 10.4 L9.6 2.2 L12.6 4.8 L5.6 13 Z" fill="none" stroke="#5a9bff" stroke-width="1.3" stroke-linejoin="round"/><path d="M8.2 15.6 H16" stroke="#5a9bff" stroke-width="1.3"/></svg>
<div class="t" style="left:2031.5px;top:685.5px;font-size:18px;color:#5a9bff;">编辑</div>
<svg style="left:2084.5px;top:684.9px" width="18" height="18" viewBox="0 0 18 18"><path d="M1.4 3.8 H16.6 M5.6 3.8 V1.4 H12.4 V3.8 M3.4 3.8 V16.4 H14.6 V3.8 M6.9 7 V13.4 M11.1 7 V13.4" fill="none" stroke="#f28b8b" stroke-width="1.4"/></svg>
<div class="t" style="left:2109.5px;top:685.5px;font-size:18px;color:#f28b8b;">删除</div>
<div class="t" style="left:437px;top:791.5px;font-size:18px;color:#606266;">西南科技大学“田间课堂”为地洛镇农户传经送宝</div>
<svg style="left:1076px;top:756px;overflow:hidden" width="150" height="75" viewBox="0 0 150 75" preserveAspectRatio="none"><g transform="scale(0.0669643,0.0669643)"><g filter="url(#bl)">
<rect x="-60" y="-60" width="2360" height="1240" fill="#c9cdd2"/>
<path d="M0 210 Q80 230 120 260 L140 400 L0 400 Z" fill="#707a88"/>
<path d="M820 300 Q1200 200 1500 80 Q1700 0 1850 0 H2240 V320 L820 320 Z" fill="#6c7384"/>
<path d="M1700 0 H2240 V260 Q1950 250 1700 240 Z" fill="#7f8a6c"/>
<path d="M1180 260 Q1500 240 1800 230 L2240 230 V1120 H1180 Z" fill="#a69a86"/>
<rect x="-60" y="650" width="2360" height="530" fill="#8c7c62"/>
<path d="M0 400 L100 380 L160 480 L0 520 Z" fill="#d0b040"/>
<path d="M0 520 Q60 430 200 420 L380 440 Q560 560 580 900 L520 1120 L0 1120 Z" fill="#2b3040"/>
<ellipse cx="270" cy="320" rx="160" ry="110" fill="#222226"/>
<ellipse cx="310" cy="390" rx="80" ry="80" fill="#b49278"/>
<path d="M360 480 Q400 380 500 380 L640 420 L680 660 L560 660 L560 900 L460 900 Z" fill="#3a3c48"/>
<rect x="460" y="640" width="190" height="260" fill="#4a5670"/>
<ellipse cx="530" cy="330" rx="70" ry="50" fill="#2a2a2e"/>
<path d="M620 400 L860 380 L860 800 L680 800 Z" fill="#2e2e34"/>
<path d="M840 420 Q900 360 1000 370 L1080 420 L1060 620 L860 620 Z" fill="#6a5a48"/>
<rect x="850" y="600" width="80" height="150" fill="#8a8a90"/>
<path d="M1060 420 Q1150 380 1250 400 Q1380 480 1380 560 L1300 700 L1100 720 Z" fill="#30354c"/>
<rect x="1100" y="700" width="150" height="300" fill="#4a5670"/>
<ellipse cx="920" cy="320" rx="70" ry="40" fill="#2a2a2e"/>
<ellipse cx="1120" cy="330" rx="70" ry="40" fill="#2a2a2e"/>
<ellipse cx="800" cy="330" rx="60" ry="50" fill="#3a3a40"/>
<ellipse cx="680" cy="350" rx="60" ry="40" fill="#707278"/>
<path d="M700 830 Q800 700 1000 600 Q1200 700 1280 900 L1200 1100 L800 1080 Z" fill="#557540"/>
<path d="M1640 380 Q1700 340 1780 360 L1900 460 L1880 620 L1640 600 Z" fill="#26262c"/>
<ellipse cx="1710" cy="290" rx="80" ry="60" fill="#222226"/>
<path d="M1880 420 Q2000 380 2120 440 Q2200 560 2200 740 L2140 1050 L2020 1060 L1920 600 Z" fill="#56505e"/>
<ellipse cx="1960" cy="290" rx="120" ry="70" fill="#222226"/>
<ellipse cx="1950" cy="370" rx="70" ry="70" fill="#a88a74"/>
<path d="M1490 640 Q1600 540 1800 520 Q2000 600 2040 900 L2000 1120 L1470 1120 Q1450 900 1490 640 Z" fill="#c6c4bc"/>
<ellipse cx="1650" cy="440" rx="150" ry="90" fill="#242428"/>
<ellipse cx="1610" cy="520" rx="90" ry="70" fill="#a0806a"/>
</g></g></svg>
<div class="t" style="left:1372px;top:790.0px;font-size:18px;color:#606266;">0</div>
<div class="t" style="left:1780px;top:790.0px;font-size:18px;color:#606266;">2024-12-20 07:06:02</div>
<svg style="left:2006px;top:790.9px" width="18" height="18" viewBox="0 0 18 18"><path d="M1.6 14.6 L2.6 10.4 L9.6 2.2 L12.6 4.8 L5.6 13 Z" fill="none" stroke="#5a9bff" stroke-width="1.3" stroke-linejoin="round"/><path d="M8.2 15.6 H16" stroke="#5a9bff" stroke-width="1.3"/></svg>
<div class="t" style="left:2031.5px;top:791.5px;font-size:18px;color:#5a9bff;">编辑</div>
<svg style="left:2084.5px;top:790.9px" width="18" height="18" viewBox="0 0 18 18"><path d="M1.4 3.8 H16.6 M5.6 3.8 V1.4 H12.4 V3.8 M3.4 3.8 V16.4 H14.6 V3.8 M6.9 7 V13.4 M11.1 7 V13.4" fill="none" stroke="#f28b8b" stroke-width="1.4"/></svg>
<div class="t" style="left:2109.5px;top:791.5px;font-size:18px;color:#f28b8b;">删除</div>
<div class="t" style="left:437px;top:896.5px;font-size:18px;color:#606266;">翁坪乡：发放肥料暖民心 助农生产促丰收</div>
<svg style="left:1076px;top:861px;overflow:hidden" width="150" height="75" viewBox="0 0 150 75" preserveAspectRatio="none"><g transform="scale(0.0669643,0.0669643)"><g filter="url(#bl)">
<rect x="-60" y="-60" width="2360" height="1240" fill="#e6e7ea"/>
<rect x="200" y="0" width="300" height="70" fill="#8c9298"/>
<rect x="810" y="0" width="280" height="70" fill="#8c9298"/>
<rect x="1370" y="0" width="240" height="140" fill="#8c9298"/>
<rect x="1760" y="30" width="170" height="140" fill="#8c9298"/>
<rect x="2110" y="50" width="130" height="130" fill="#8c9298"/>
<rect x="0" y="180" width="2240" height="30" fill="#d0d2d6"/>
<path d="M360 100 L1470 90 L1550 170 L380 130 Z" fill="#4a7cb4"/>
<rect x="500" y="180" width="900" height="320" fill="#f0f0f0"/>
<rect x="700" y="210" width="480" height="85" fill="#c23030"/>
<rect x="840" y="300" width="210" height="200" fill="#2a3a64"/>
<rect x="1340" y="230" width="70" height="240" fill="#d09030"/>
<rect x="0" y="250" width="420" height="230" fill="#8e5850"/>
<rect x="20" y="300" width="360" height="150" fill="#e2d8a8"/>
<rect x="1420" y="320" width="820" height="200" fill="#905a54"/>
<rect x="1460" y="370" width="320" height="110" fill="#e6e6e0"/>
<rect x="1880" y="380" width="270" height="100" fill="#e0e0e0"/>
<rect x="1420" y="310" width="500" height="25" fill="#4a7cb4"/>
<rect x="-60" y="540" width="2360" height="640" fill="#b2aea8"/>
<path d="M0 560 L400 560 L340 640 Q150 720 0 820 Z" fill="#c6c4c0"/>
<ellipse cx="560" cy="770" rx="120" ry="30" fill="#8c8882"/>
<ellipse cx="820" cy="790" rx="150" ry="40" fill="#8c8882"/>
<ellipse cx="1200" cy="1010" rx="220" ry="80" fill="#8c8882"/>
<rect x="80" y="510" width="300" height="120" fill="#c4cce0"/>
<rect x="1310" y="510" width="300" height="100" fill="#c4cce0"/>
<rect x="1720" y="690" width="300" height="70" fill="#c4cce0"/>
<rect x="400" y="480" width="250" height="150" fill="#dcc030"/>
<rect x="480" y="390" width="90" height="250" fill="#30303c"/>
<rect x="640" y="420" width="90" height="210" fill="#30303c"/>
<rect x="820" y="370" width="70" height="130" fill="#d02828"/>
<rect x="890" y="400" width="80" height="150" fill="#3a5ca0"/>
<rect x="1090" y="380" width="80" height="150" fill="#2c2c34"/>
<rect x="1230" y="410" width="90" height="150" fill="#2c2c34"/>
<path d="M900 540 L1230 540 L1200 640 L930 630 Z" fill="#d07030"/>
<circle cx="950" cy="640" r="40" fill="#3a3a3a"/>
<rect x="1660" y="450" width="90" height="230" fill="#4a4a52"/>
<rect x="1800" y="430" width="100" height="220" fill="#3a3a44"/>
<rect x="1790" y="600" width="110" height="80" fill="#3c9a50"/>
<rect x="2130" y="500" width="110" height="170" fill="#cfb8b0"/>
</g></g></svg>
<div class="t" style="left:1372px;top:895.0px;font-size:18px;color:#606266;">0</div>
<div class="t" style="left:1780px;top:895.0px;font-size:18px;color:#606266;">2024-12-20 07:04:37</div>
<svg style="left:2006px;top:895.9px" width="18" height="18" viewBox="0 0 18 18"><path d="M1.6 14.6 L2.6 10.4 L9.6 2.2 L12.6 4.8 L5.6 13 Z" fill="none" stroke="#5a9bff" stroke-width="1.3" stroke-linejoin="round"/><path d="M8.2 15.6 H16" stroke="#5a9bff" stroke-width="1.3"/></svg>
<div class="t" style="left:2031.5px;top:896.5px;font-size:18px;color:#5a9bff;">编辑</div>
<svg style="left:2084.5px;top:895.9px" width="18" height="18" viewBox="0 0 18 18"><path d="M1.4 3.8 H16.6 M5.6 3.8 V1.4 H12.4 V3.8 M3.4 3.8 V16.4 H14.6 V3.8 M6.9 7 V13.4 M11.1 7 V13.4" fill="none" stroke="#f28b8b" stroke-width="1.4"/></svg>
<div class="t" style="left:2109.5px;top:896.5px;font-size:18px;color:#f28b8b;">删除</div>
<div class="t" style="left:999.5px;top:1002.8px;font-size:19.5px;color:#606266;">共</div>
<div class="t" style="left:1025px;top:1001.5px;font-size:19.5px;color:#606266;">5</div>
<div class="t" style="left:1041px;top:1002.8px;font-size:19.5px;color:#606266;">条</div>
<div class="a" style="left:1083px;top:991px;width:150px;height:42px;background:#fff;border:1px solid #dcdfe6;border-radius:5px"></div>
<div class="t" style="left:1113px;top:1002px;font-size:19.5px;color:#606266;">10</div>
<div class="t" style="left:1134px;top:1003.3px;font-size:19.5px;color:#606266;">条</div>
<div class="t" style="left:1152.5px;top:1002px;font-size:19.5px;color:#606266;">/</div>
<div class="t" style="left:1158.5px;top:1003.3px;font-size:19.5px;color:#606266;">页</div>
<svg style="left:1208.5px;top:1009px" width="12.5" height="7" viewBox="0 0 12.5 7"><path d="M0.5 0.5 L6.25 6.5 L12.0 0.5" fill="none" stroke="#c0c4cc" stroke-width="1.2"/></svg>
<svg style="left:1273px;top:1005px" width="8" height="14" viewBox="0 0 8 14"><path d="M7.5 0.5 L0.5 7.0 L7.5 13.5" fill="none" stroke="#a8abb2" stroke-width="1.6"/></svg>
<div class="t" style="left:1330px;top:1002px;font-size:19.5px;color:#5a9bff;font-weight:bold;">1</div>
<svg style="left:1390px;top:1005px" width="8" height="14" viewBox="0 0 8 14"><path d="M0.5 0.5 L7.5 7.0 L0.5 13.5" fill="none" stroke="#a8abb2" stroke-width="1.6"/></svg>
<div class="t" style="left:1451.5px;top:1003.3px;font-size:19.5px;color:#606266;">前往</div>
<div class="a" style="left:1496px;top:992px;width:69px;height:42px;background:#fff;border:1px solid #dcdfe6;border-radius:5px"></div>
<div class="t" style="left:1525.5px;top:1002px;font-size:19.5px;color:#606266;">1</div>
<div class="t" style="left:1571px;top:1003.3px;font-size:19.5px;color:#606266;">页</div>
</body></html>
